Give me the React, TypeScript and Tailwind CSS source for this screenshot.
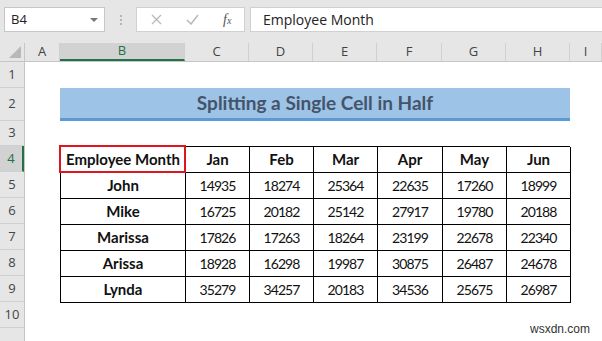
import React from 'react'

const cols = ['A', 'B', 'C', 'D', 'E', 'F', 'G', 'H', 'I']
const colW = ['w-[35px]', 'w-[125px]', 'w-[64px]', 'w-[64px]', 'w-[64px]', 'w-[65px]', 'w-[64px]', 'w-[64px]', 'flex-1']
const rowH = ['h-[26px]', 'h-[33px]', 'h-[25px]', 'h-[26px]', 'h-[26px]', 'h-[26px]', 'h-[26px]', 'h-[26px]', 'h-[26px]', 'h-[26px]', 'h-[26px]']

const months = ['Jan', 'Feb', 'Mar', 'Apr', 'May', 'Jun']
const data: [string, number[]][] = [
  ['John', [14935, 18274, 25364, 22635, 17260, 18999]],
  ['Mike', [16725, 20182, 25142, 27917, 19780, 20188]],
  ['Marissa', [17826, 17263, 18264, 23199, 22678, 22340]],
  ['Arissa', [18928, 16298, 19987, 30875, 26487, 24678]],
  ['Lynda', [35279, 34257, 20183, 34536, 25675, 26987]],
]

const calibri = { fontFamily: 'Lato, "Open Sans", sans-serif' }

export default function App() {
  return (
    <div className="w-[602px] h-[341px] overflow-hidden bg-white relative" style={{ fontFamily: '"Open Sans", sans-serif' }}>
      {/* formula bar */}
      <div className="h-[43px] bg-[#e6e6e6] flex items-start pt-[7px] pl-[4px]">
        <div className="w-[101px] h-[25px] bg-white border border-[#c6c6c6] flex items-center justify-between pl-[6px] pr-[6px] text-[13px] text-[#222]">
          <span>B4</span>
          <span className="w-0 h-0 border-l-[4px] border-r-[4px] border-t-[4px] border-l-transparent border-r-transparent border-t-[#777]" />
        </div>
        <div className="w-[31px] h-[25px] flex flex-col items-center justify-center gap-[2px]">
          <span className="w-[2px] h-[2px] bg-[#b5b5b5]" />
          <span className="w-[2px] h-[2px] bg-[#b5b5b5]" />
          <span className="w-[2px] h-[2px] bg-[#b5b5b5]" />
        </div>
        <div className="w-[109px] h-[25px] bg-white border border-[#d0d0d0] flex items-center text-[#b0b0b0]">
          <svg className="ml-[14px]" width="11" height="11" viewBox="0 0 11 11"><path d="M1 1 L10 10 M10 1 L1 10" stroke="#b8b8b8" strokeWidth="1.3" /></svg>
          <svg className="ml-[24px]" width="13" height="11" viewBox="0 0 13 11"><path d="M1 6 L5 10 L12 1" stroke="#b8b8b8" strokeWidth="1.5" fill="none" /></svg>
          <span className="ml-[24px] text-[#555] italic text-[14px]" style={{ fontFamily: '"Liberation Serif", serif' }}>f<span className="text-[10px]">x</span></span>
        </div>
        <div className="ml-[5px] flex-1 h-[25px] bg-white border border-[#d0d0d0] border-r-0 flex items-center pl-[12px] text-[14px] text-[#222]">
          Employee Month
        </div>
      </div>

      {/* column headers */}
      <div className="flex h-[19px] bg-[#e6e6e6] border-b border-[#c6c6c6] text-[13px] text-[#444]">
        <div className="w-[25px] border-r border-[#c6c6c6] relative">
          <svg className="absolute right-[3px] bottom-[3px]" width="12" height="12" viewBox="0 0 12 12"><path d="M12 0 L12 12 L0 12 Z" fill="#b8b8b8" /></svg>
        </div>
        {cols.map((c, i) => (
          <div
            key={c}
            className={`${colW[i]} flex items-center justify-center border-r border-[#d0d0d0] ${c === 'B' ? 'bg-[#d2d2d2] border-b-2 border-b-[#217346] text-[#217346]' : ''}`}
          >
            {c}
          </div>
        ))}
      </div>

      {/* sheet */}
      <div className="flex">
        <div className="w-[25px] bg-[#e6e6e6] border-r border-[#c6c6c6] text-[13px] text-[#444]">
          {rowH.map((h, i) => (
            <div
              key={i}
              className={`${h} flex items-center justify-center border-b border-[#d0d0d0] ${i === 3 ? 'bg-[#d2d2d2] text-[#217346] border-r-2 border-r-[#217346]' : ''}`}
            >
              {i < 10 ? i + 1 : ''}
            </div>
          ))}
        </div>
        <div className="flex-1" style={calibri}>
          <div className="h-[26px]" />
          <div className="flex h-[33px]">
            <div className="w-[35px]" />
            <div className="w-[510px] bg-[#9dc3e6] border-b-[3px] border-[#5b9bd5] flex items-center justify-center text-[19px] font-bold text-[#44546a]">
              Splitting a Single Cell in Half
            </div>
          </div>
          <div className="h-[25px]" />
          <div className="flex">
            <div className="w-[35px]" />
            <div className="w-[510px] relative">
              <div className="grid grid-cols-[125px_64px_64px_64px_65px_64px_64px] border-t border-l border-black text-[15px] text-[#111]">
                <div className="h-[26px] border-r border-b border-black flex items-center justify-center font-bold">Employee Month</div>
                {months.map(m => (
                  <div key={m} className="h-[26px] border-r border-b border-black flex items-center justify-center font-bold">{m}</div>
                ))}
                {data.map(([name, vals]) => (
                  <React.Fragment key={name}>
                    <div className="h-[26px] border-r border-b border-black flex items-center justify-center font-bold">{name}</div>
                    {vals.map((v, j) => (
                      <div key={j} className="h-[26px] border-r border-b border-black flex items-center justify-center text-[14px] tracking-[-0.9px]">{v}</div>
                    ))}
                  </React.Fragment>
                ))}
              </div>
              <div className="absolute left-[-1px] top-[-1px] w-[127px] h-[28px] border-[2.5px] border-[#e0141e]" />
            </div>
          </div>
        </div>
      </div>

      <div className="absolute right-[12px] bottom-[3px] text-[12px] text-[#333]" style={{ fontFamily: '"Liberation Sans", sans-serif' }}>wsxdn.com</div>
    </div>
  )
}
